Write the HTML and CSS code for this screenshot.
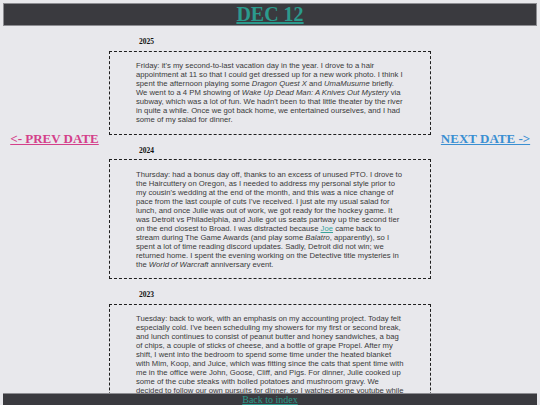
FILE: index.html
```html
<!DOCTYPE html>
<html lang="en">
<head>
<meta charset="utf-8">
<title>Dec 12</title>
<link rel="stylesheet" href="styles.css">
</head>
<body>
<header class="banner">
  <h1 class="banner-title"><a href="#">DEC 12</a></h1>
</header>

<main class="layout">
  <nav class="side side-prev">
    <a class="nav-link prev" href="#">&lt;- PREV DATE</a>
  </nav>

  <div class="entries">
    <section class="entry">
      <h6 class="year">2025</h6>
      <div class="entry-box">
        <p>Friday: it's my second-to-last vacation day in the year. I drove to a hair appointment at 11 so that I could get dressed up for a new work photo. I think I spent the afternoon playing some <i>Dragon Quest X</i> and <i>UmaMusume</i> briefly. We went to a 4 PM showing of <i>Wake Up Dead Man: A Knives Out Mystery</i> via subway, which was a lot of fun. We hadn't been to that little theater by the river in quite a while. Once we got back home, we entertained ourselves, and I had some of my salad for dinner.</p>
      </div>
    </section>

    <section class="entry">
      <h6 class="year">2024</h6>
      <div class="entry-box">
        <p>Thursday: had a bonus day off, thanks to an excess of unused PTO. I drove to the Haircuttery on Oregon, as I needed to address my personal style prior to my cousin's wedding at the end of the month, and this was a nice change of pace from the last couple of cuts I've received. I just ate my usual salad for lunch, and once Julie was out of work, we got ready for the hockey game. It was Detroit vs Philadelphia, and Julie got us seats partway up the second tier on the end closest to Broad. I was distracted because <a class="inline-link" href="#">Joe</a> came back to stream during The Game Awards (and play some <i>Balatro</i>, apparently), so I spent a lot of time reading discord updates. Sadly, Detroit did not win; we returned home. I spent the evening working on the Detective title mysteries in the <i>World of Warcraft</i> anniversary event.</p>
      </div>
    </section>

    <section class="entry">
      <h6 class="year">2023</h6>
      <div class="entry-box">
        <p>Tuesday: back to work, with an emphasis on my accounting project. Today felt especially cold. I've been scheduling my showers for my first or second break, and lunch continues to consist of peanut butter and honey sandwiches, a bag of chips, a couple of sticks of cheese, and a bottle of grape Propel. After my shift, I went into the bedroom to spend some time under the heated blanket with Mim, Koop, and Juice, which was fitting since the cats that spent time with me in the office were John, Goose, Cliff, and Pigs. For dinner, Julie cooked up some of the cube steaks with boiled potatoes and mushroom gravy. We decided to follow our own pursuits for dinner, so I watched some youtube while Julie read.</p>
      </div>
    </section>
  </div>

  <nav class="side side-next">
    <a class="nav-link next" href="#">NEXT DATE -&gt;</a>
  </nav>
</main>

<footer class="footer">
  <a href="#">Back to index</a>
</footer>
</body>
</html>
```
FILE: styles.css
```css
html, body {
  margin: 0;
  padding: 0;
}

body {
  background: #e8e8ec;
  font-family: "Liberation Serif", "Times New Roman", serif;
  color: #222;
}

/* top title bar */
.banner {
  margin: 3px 3px 0;
  background: #3a3a3f;
  border: 1px solid #8d8d92;
  text-align: center;
}

.banner-title {
  margin: 0;
  font-size: 20px;
  line-height: 21px;
  font-weight: bold;
}

.banner-title a {
  color: #2b9a8d;
}

/* three column layout: prev link, entries, next link */
.layout {
  display: grid;
  grid-template-columns: 1fr 322px 1fr;
  padding-bottom: 40px;
}

.side {
  text-align: center;
  padding-top: 103px;
}

.nav-link {
  font-weight: bold;
  font-size: 13px;
  line-height: 15px;
}

.prev {
  color: #d43f8a;
}

.next {
  color: #3a8fd2;
}

.year {
  margin: 12px 0 4px 30px;
  font-size: 7.5px;
  line-height: 8.5px;
  font-weight: bold;
  color: #111;
}

.entry-box {
  border: 1px dashed #1e1e1e;
  padding: 9.5px 26px;
}

.entry-box p {
  margin: 0;
  font-family: "Liberation Sans", Arial, sans-serif;
  font-size: 7.7px;
  line-height: 9px;
  color: #3a3a3a;
}

.inline-link {
  color: #3aa39a;
}

/* footer pinned to the bottom of the window */
.footer {
  position: fixed;
  left: 3px;
  right: 3px;
  bottom: -6px;
  height: 17px;
  background: #3a3a3f;
  border-top: 1px solid #8d8d92;
  text-align: center;
  font-size: 10px;
  line-height: 11px;
}

.footer a {
  color: #2b9a8d;
}
```
